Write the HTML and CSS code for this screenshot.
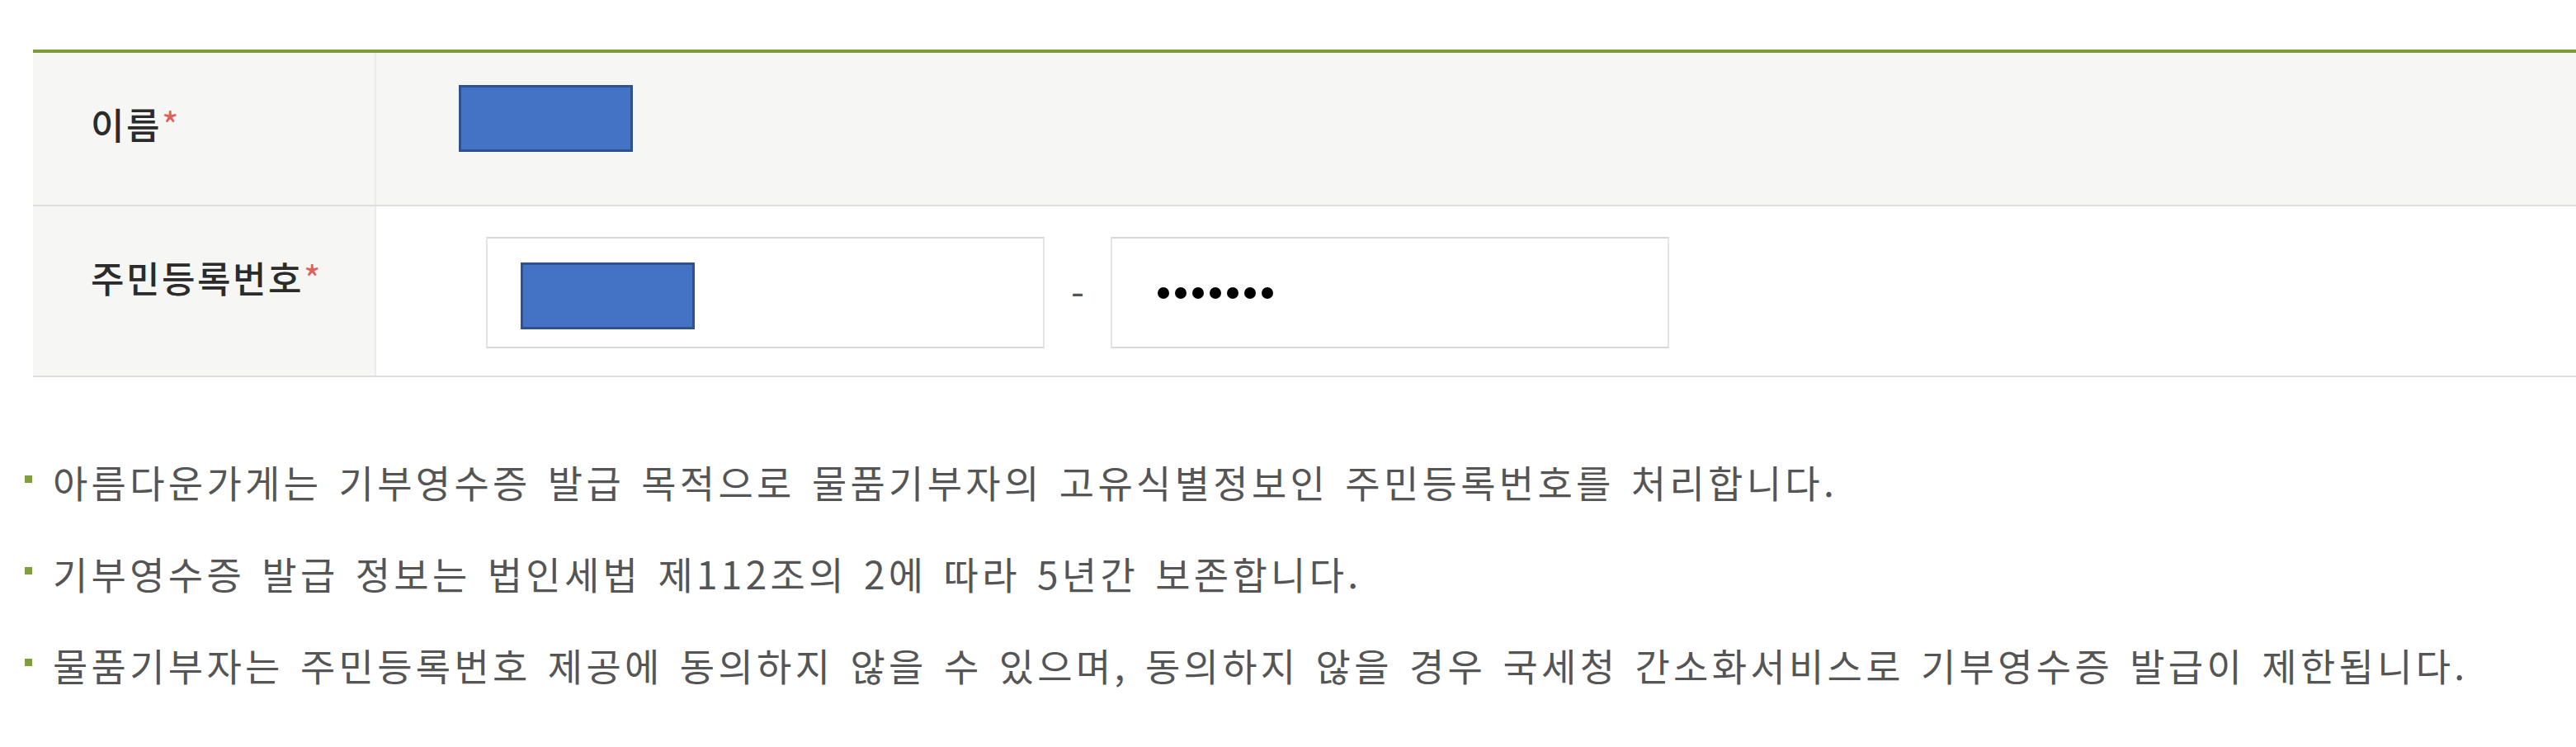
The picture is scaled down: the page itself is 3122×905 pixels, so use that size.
FILE: index.html
```html
<!DOCTYPE html>
<html lang="ko">
<head>
    <meta charset="UTF-8">
    <meta name="viewport" content="width=device-width, initial-scale=1.0">
    <title>기부영수증 신청</title>
    <link rel="stylesheet" href="styles.css">
</head>
<body>

    <div class="form-table">
        <div class="row row-name">
            <div class="th">이름<span class="req">*</span></div>
            <div class="td">
                <div class="mask"></div>
            </div>
        </div>
        <div class="row row-jumin">
            <div class="th">주민등록번호<span class="req">*</span></div>
            <div class="td">
                <div class="field field-first">
                    <div class="mask"></div>
                </div>
                <span class="dash">-</span>
                <div class="field field-second">
                    <span class="dot"></span><span class="dot"></span><span class="dot"></span><span class="dot"></span><span class="dot"></span><span class="dot"></span><span class="dot"></span>
                </div>
            </div>
        </div>
    </div>

    <ul class="notice">
        <li><span class="mark"></span>아름다운가게는 기부영수증 발급 목적으로 물품기부자의 고유식별정보인 주민등록번호를 처리합니다.</li>
        <li><span class="mark"></span>기부영수증 발급 정보는 법인세법 제112조의 2에 따라 5년간 보존합니다.</li>
        <li><span class="mark"></span>물품기부자는 주민등록번호 제공에 동의하지 않을 수 있으며, 동의하지 않을 경우 국세청 간소화서비스로 기부영수증 발급이 제한됩니다.</li>
    </ul>

</body>
</html>
```

FILE: styles.css
```css
body {
    margin: 0;
    background-color: #fff;
    font-family: "Noto Sans CJK KR", "Noto Sans", sans-serif;
}
.form-table {
    margin: 60px 0 0 40px;
    border-top: 4px solid #7b9a3c;
    border-bottom: 2px solid #dedede;
}
.row {
    display: flex;
}
.row + .row {
    border-top: 2px solid #dedede;
}
.row-name {
    height: 184px;
    background-color: #f6f6f4;
}
.row-jumin {
    height: 205px;
}
.th {
    width: 344px;
    flex-shrink: 0;
    padding: 61px 0 0 70px;
    background-color: #f6f6f4;
    border-right: 2px solid #ebebea;
    font-size: 44px;
    font-weight: 500;
    letter-spacing: 2.5px;
    line-height: 50px;
    color: #2b2b2b;
}
.req {
    color: #e0605f;
    font-weight: 400;
}
.td {
    flex: 1;
    display: flex;
    align-items: flex-start;
}
.row-name .td {
    padding: 39px 0 0 100px;
}
.row-jumin .td {
    padding: 37px 0 0 133px;
    align-items: center;
    align-self: flex-start;
}
.mask {
    width: 205px;
    height: 75px;
    background-color: #4472c4;
    border: 3px solid #2f528f;
}
.field {
    width: 673px;
    height: 131px;
    border: 2px solid #e4e4e4;
    border-top-color: #d8d8d8;
    border-bottom-color: #d8d8d8;
    background-color: #fff;
    display: flex;
}
.field-first {
    align-items: flex-start;
}
.field-first .mask {
    margin: 29px 0 0 40px;
}
.field-second {
    align-items: center;
    gap: 7px;
}
.field-second .dot:first-child {
    margin-left: 55px;
}
.dot {
    width: 14px;
    height: 14px;
    border-radius: 50%;
    background-color: #000;
}
.dash {
    width: 80px;
    text-align: center;
    font-size: 46px;
    color: #555;
}
.notice {
    list-style: none;
    margin: 94px 0 0 0;
    padding: 0 0 0 30px;
}
.notice li {
    font-size: 46px;
    line-height: 64px;
    margin-bottom: 47px;
    color: #555;
    letter-spacing: 4.3px;
    word-spacing: 3px;
    white-space: nowrap;
}
.mark {
    display: inline-block;
    width: 9px;
    height: 9px;
    background-color: #7f9f3f;
    margin-right: 25px;
    vertical-align: 18px;
}
```
